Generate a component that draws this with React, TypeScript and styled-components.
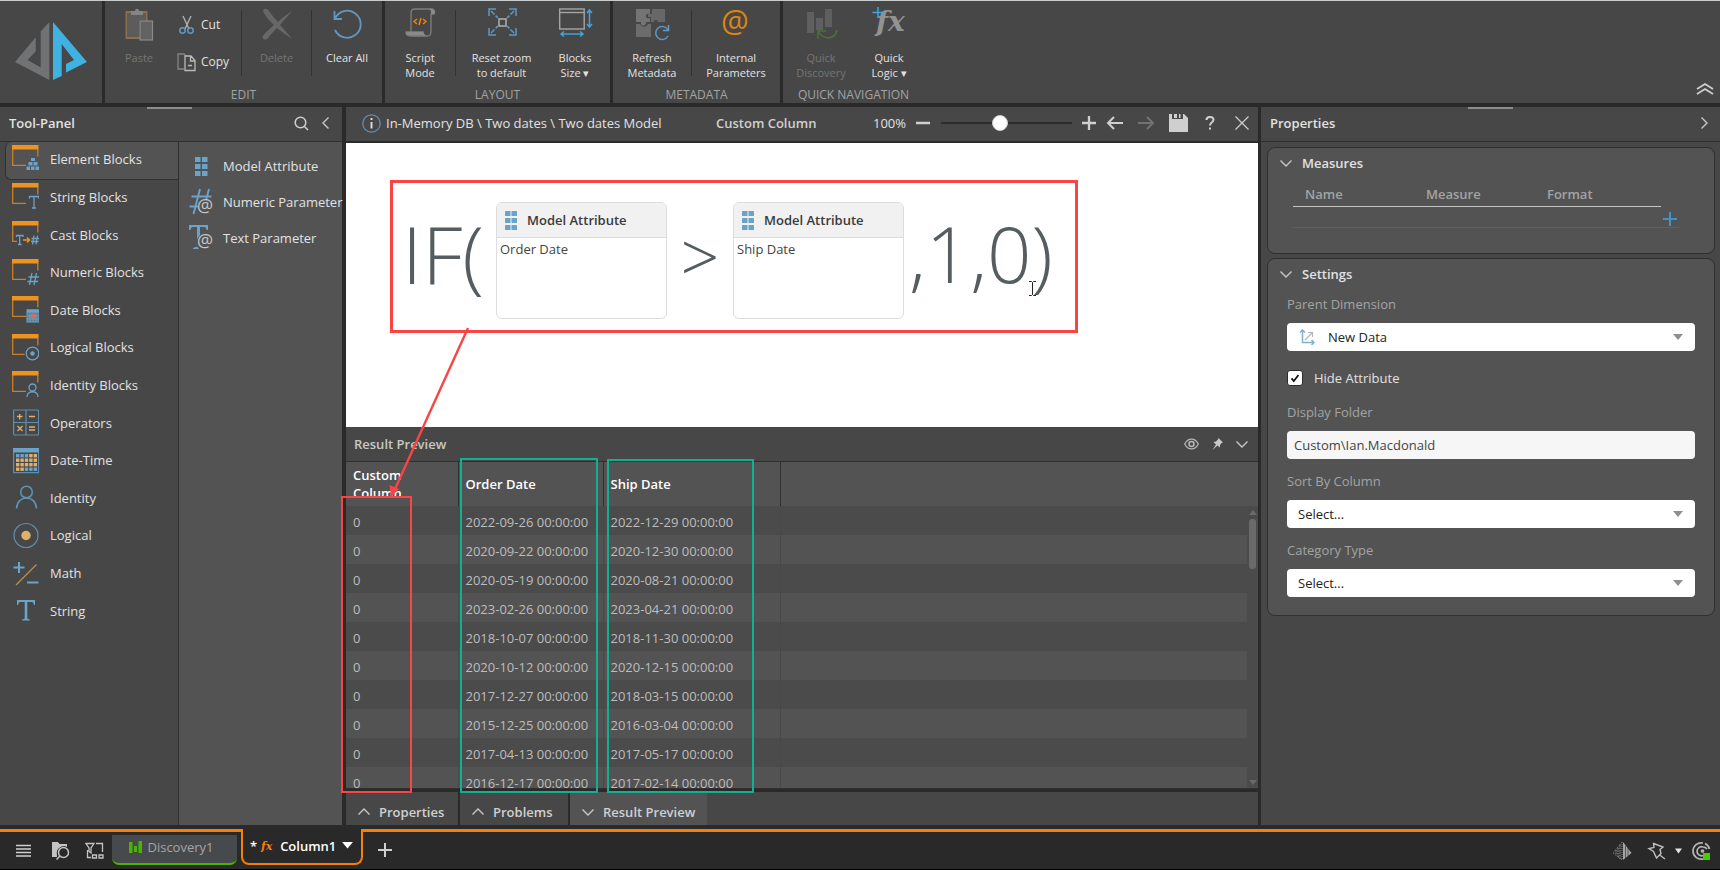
import React from "react";
import styled, { createGlobalStyle, css } from "styled-components";

const c = {
  gap: "#2a2a2a",
  panel: "#474747",
  raised: "#535353",
  stripe: "#4b4b4b",
  line: "#303030",
  text: "#e2e2e2",
  muted: "#a3a3a3",
  dim: "#757575",
  blue: "#6ba3c9",
  bright: "#3fa4df",
  amber: "#ee9220",
  orange: "#f77f07",
  red: "#fb4444",
  teal: "#10b090",
};

const Global = createGlobalStyle`
  * { box-sizing: border-box; }
  body { margin: 0; background: ${c.gap}; color: ${c.text}; font: 13px/20px "Open Sans", "Noto Sans", sans-serif; }
  button { font: inherit; color: inherit; background: none; border: 0; padding: 0; margin: 0; text-align: left; }
  h2, h3 { font-size: 13px; font-weight: 600; margin: 0; }
  ul { list-style: none; margin: 0; padding: 0; }
  svg { display: block; flex: none; }
`;

const Page = styled.div`
  display: flex;
  flex-direction: column;
  height: 100vh;
  border-top: 1px solid #c9cccc;
  border-bottom: 1px solid #000;
  overflow: hidden;
`;

/* ---------- ribbon ---------- */

const Ribbon = styled.header`
  display: flex;
  gap: 3px;
  height: 102px;
  flex: none;
`;

const Brand = styled.div`
  width: 102px;
  background: ${c.panel};
  padding: 21px 0 0 15px;
`;

const Group = styled.section<{ $w: number; $bare?: boolean }>`
  width: ${(p) => p.$w}px;
  background: ${c.panel};
  display: flex;
  flex-direction: column;
  justify-content: space-between;
  margin-right: ${(p) => (p.$bare ? "-3px" : "0")};
`;

const GroupItems = styled.div`
  display: flex;
`;

const GroupName = styled.div`
  text-align: center;
  color: ${c.muted};
  font-size: 12px;
  line-height: 16px;
`;

const Tool = styled.button<{ $w: number }>`
  width: ${(p) => p.$w}px;
  display: flex;
  flex-direction: column;
  align-items: center;
  gap: 9px;
  padding-top: 6px;
  text-align: center;
  font-size: 11px;
  line-height: 15px;
  white-space: pre-line;
  &:disabled { color: ${c.dim}; }
`;

const ToolDivider = styled.span`
  width: 1px;
  height: 66px;
  margin-top: 9px;
  background: #333;
`;

const SmallTools = styled.div`
  width: 68px;
  display: flex;
  flex-direction: column;
  gap: 17px;
  padding: 14px 0 0 4px;
`;

const SmallTool = styled.button`
  display: flex;
  align-items: center;
  gap: 5px;
  font-size: 12px;
  line-height: 20px;
`;

const RibbonRest = styled.div`
  flex: 1;
  background: ${c.panel};
  display: flex;
  justify-content: flex-end;
  align-items: flex-end;
  padding: 0 6px 8px;
`;

/* ---------- panels ---------- */

const Body = styled.main`
  flex: 1;
  min-height: 0;
  display: flex;
  padding: 4px 0;
`;

const Panel = styled.section<{ $w?: number }>`
  display: flex;
  flex-direction: column;
  min-width: 0;
  background: ${c.panel};
  ${(p) => (p.$w ? css`width: ${p.$w}px; flex: none;` : css`flex: 1; position: relative; margin: 0 3px 0 4px;`)}
`;

const PanelHead = styled.div`
  height: 35px;
  flex: none;
  display: flex;
  align-items: center;
  gap: 11px;
  padding: 0 10px 2px 9px;
  border-bottom: 1px solid ${c.line};
  position: relative;
  h2 { flex: 1; }
`;

const Grip = styled.span<{ $left: number }>`
  position: absolute;
  top: 0;
  left: ${(p) => p.$left}%;
  width: 45px;
  height: 2px;
  background: #8d8d8d;
`;

const ToolBody = styled.div`
  flex: 1;
  display: flex;
`;

const Categories = styled.ul`
  width: 178px;
  padding-left: 5px;
  display: grid;
  grid-auto-rows: 1fr;
  height: 489px;
`;

const Category = styled.button<{ $on: boolean }>`
  width: 100%;
  height: 100%;
  display: flex;
  align-items: center;
  gap: 11px;
  padding-left: 7px;
  padding-bottom: 3px;
  ${(p) =>
    p.$on &&
    css`
      background: ${c.raised};
      border-left: 1px solid ${c.line};
      border-bottom: 1px solid ${c.line};
      border-radius: 6px 0 0 6px;
      padding-left: 6px;
    `}
`;

const Elements = styled.ul`
  flex: 1;
  min-width: 0;
  background: ${c.raised};
  border-left: 1px solid ${c.line};
  padding: 6px 0 0 9px;
`;

const Element = styled.button`
  display: flex;
  align-items: center;
  gap: 7px;
  height: 36px;
  white-space: nowrap;
`;

/* ---------- editor ---------- */

const EditorBar = styled.div`
  height: 36px;
  flex: none;
  display: flex;
  align-items: center;
  padding: 0 0 2px 16px;
  border-bottom: 2px solid ${c.gap};
`;

const Crumbs = styled.span`
  width: 335px;
  padding-left: 5px;
  white-space: nowrap;
`;

const EditorTitle = styled.h2`
  flex: 1;
  color: #d0d0d0;
`;

const ZoomValue = styled.output`
  width: 43px;
`;

const Slider = styled.input`
  appearance: none;
  width: 131px;
  height: 16px;
  margin: 0 10px 0 11px;
  background: linear-gradient(#2c2c2c, #2c2c2c) center / 100% 2px no-repeat;
  &::-webkit-slider-thumb {
    appearance: none;
    width: 16px;
    height: 16px;
    border-radius: 50%;
    background: #fff;
    border: 1px solid #cfcfcf;
  }
`;

const BarActions = styled.div`
  display: flex;
  align-items: center;
  padding-left: 2px;
  button { width: 32px; display: flex; justify-content: center; }
`;

const Canvas = styled.div`
  height: 284px;
  flex: none;
  background: #fff;
  padding: 59px 0 0 56px;
`;

const Formula = styled.div`
  display: flex;
  align-items: flex-start;
`;

const Run = styled.span<{ $w: number; $kind?: "operator" | "tail" }>`
  width: ${(p) => p.$w}px;
  text-align: ${(p) => (p.$kind === "operator" ? "center" : "left")};
  padding-left: ${(p) => (p.$kind === "tail" ? 5 : 0)}px;
  color: #555d61;
  font-size: ${(p) => (p.$kind === "operator" ? 68 : p.$kind === "tail" ? 78 : 80)}px;
  font-weight: 300;
  line-height: ${(p) => (p.$kind === "operator" ? 108 : 102)}px;
  white-space: nowrap;
`;

const Block = styled.article`
  width: 171px;
  height: 117px;
  background: #fff;
  border: 1px solid #dcdcdc;
  border-radius: 6px;
  color: #444;
  overflow: hidden;
`;

const BlockHead = styled.div`
  height: 35px;
  display: flex;
  align-items: center;
  gap: 10px;
  padding-left: 8px;
  background: #f1f1f1;
  border-bottom: 1px solid #dcdcdc;
  font-weight: 600;
  color: #3a3a3a;
`;

const BlockBody = styled.div`
  padding: 1px 3px;
`;

const ResultHead = styled(PanelHead)`
  gap: 13px;
  padding-bottom: 0;
  padding-left: 8px;
  color: #c8c8c8;
`;

const ResultBody = styled.div`
  flex: 1;
  min-height: 0;
  overflow: hidden;
  display: flex;
  position: relative;
  background: ${c.stripe};
  border-bottom: 1px solid ${c.line};
`;

const Table = styled.table`
  flex: 1;
  width: 100%;
  border-collapse: collapse;
  table-layout: fixed;
  th, td { padding: 0 0 0 7px; text-align: left; white-space: nowrap; }
  th { height: 44px; background: ${c.raised}; color: #fff; font-weight: 600; border-right: 1px solid ${c.line}; }
  th:last-child { border-right: 0; }
  td { height: 29px; padding-top: 2px; color: #bdbdbd; border-right: 1px solid #484848; }
  td:last-child { border-right: 0; }
  tbody tr:nth-child(even) { background: ${c.raised}; }
`;

const Wrapped = styled.span`
  display: block;
  width: 60px;
  height: 30px;
  margin-bottom: 6px;
  line-height: 18px;
  white-space: normal;
  overflow: hidden;
`;

const ScrollTrack = styled.div`
  position: absolute;
  right: 0;
  top: 44px;
  bottom: 0;
  width: 11px;
  background: ${c.stripe};
  display: flex;
  flex-direction: column;
  align-items: center;
  gap: 4px;
  padding: 4px 0 3px;
`;

const ScrollThumb = styled.span`
  width: 7px;
  height: 50px;
  margin-bottom: auto;
  border-radius: 3px;
  background: #6a6a6a;
`;

const ResultTabs = styled.div`
  height: 36px;
  flex: none;
  display: flex;
  gap: 2px;
  border-top: 3px solid ${c.gap};
  background: ${c.panel};
`;

const ResultTab = styled.button<{ $w: number; $on?: boolean }>`
  width: ${(p) => p.$w}px;
  display: flex;
  align-items: center;
  gap: 9px;
  padding: 6px 0 0 12px;
  font-weight: 600;
  color: #d0d0d0;
  background: ${(p) => (p.$on ? c.raised : c.panel)};
  box-shadow: ${(p) => (p.$on ? "none" : `2px 0 0 ${c.gap}`)};
`;

/* ---------- call-outs drawn over the editor ---------- */

const Frame = styled.div<{ $x: number; $y: number; $w: number; $h: number; $color: string; $b: number }>`
  position: absolute;
  left: ${(p) => p.$x}px;
  top: ${(p) => p.$y}px;
  width: ${(p) => p.$w}px;
  height: ${(p) => p.$h}px;
  border: ${(p) => p.$b}px solid ${(p) => p.$color};
  pointer-events: none;
`;

const Pointer = styled.svg`
  position: absolute;
  left: 40px;
  top: 220px;
  pointer-events: none;
`;

const Caret = styled.svg`
  position: absolute;
  left: 683px;
  top: 174px;
`;

/* ---------- properties ---------- */

const Cards = styled.div`
  display: flex;
  flex-direction: column;
  gap: 4px;
  padding: 5px 5px 0 6px;
`;

const Card = styled.section<{ $pb: number }>`
  background: ${c.raised};
  border: 1px solid ${c.line};
  border-radius: 8px;
  padding: 5px 19px ${(p) => p.$pb}px;
`;

const CardTitle = styled.button`
  display: flex;
  align-items: center;
  gap: 10px;
  margin-left: -7px;
  font-weight: 600;
`;

const MeasureTable = styled.table`
  border-collapse: collapse;
  table-layout: fixed;
  width: calc(100% - 40px);
  margin: 11px 0 0 6px;
  th { text-align: left; font-weight: 600; color: ${c.muted}; padding: 0 0 2px 12px; border-bottom: 1px solid #c4c4c4; }
  th:not(:last-child) { width: 121px; }
`;

const AddRow = styled.div`
  display: flex;
  justify-content: flex-end;
  height: 21px;
  margin: 0 16px 0 6px;
  padding: 4px 2px 0 0;
  border-bottom: 1px solid #5e5e5e;
`;

const Fields = styled.div`
  display: flex;
  flex-direction: column;
  gap: 12px;
  margin-top: 10px;
`;

const Field = styled.div`
  display: flex;
  flex-direction: column;
  gap: 9px;
  label { color: ${c.muted}; }
`;

const Box = styled.span`
  position: relative;
  display: block;
`;

const boxStyle = css`
  width: 100%;
  height: 28px;
  border: 0;
  border-radius: 4px;
  font: inherit;
  display: block;
`;

const Select = styled.select<{ $icon?: boolean }>`
  ${boxStyle}
  appearance: none;
  background: #fff;
  color: #222;
  padding: 0 30px 0 ${(p) => (p.$icon ? 41 : 11)}px;
`;

const Input = styled.input`
  ${boxStyle}
  background: #f6f6f6;
  color: #444;
  padding: 0 7px;
`;

const Over = styled.span<{ $side: "left" | "right" }>`
  position: absolute;
  top: 0;
  bottom: 0;
  ${(p) => p.$side}: 12px;
  display: flex;
  align-items: center;
  pointer-events: none;
`;

const Check = styled.label`
  display: flex;
  align-items: center;
  gap: 11px;
  height: 27px;
  padding-top: 3px;
`;

const Tick = styled.input`
  appearance: none;
  width: 16px;
  height: 16px;
  margin: 0;
  background: #fff url("data:image/svg+xml,%3Csvg xmlns='http://www.w3.org/2000/svg' viewBox='0 0 16 16'%3E%3Cpath d='M4 8.5L6.6 11.5L12 4.5' fill='none' stroke='%23111' stroke-width='2'/%3E%3C/svg%3E") center no-repeat;
  border: 1px solid #2d2d2d;
  border-radius: 3px;
`;

/* ---------- task bar ---------- */

const TaskBar = styled.footer`
  height: 40px;
  flex: none;
  display: flex;
  align-items: flex-start;
  background: #292929;
  border-top: 3px solid ${c.orange};
`;

const TaskIcons = styled.div`
  width: 112px;
  height: 37px;
  display: flex;
  align-items: center;
  padding-left: 16px;
  gap: 14px;
`;

const DocTab = styled.button`
  width: 125px;
  height: 30px;
  margin-top: 3px;
  display: flex;
  align-items: center;
  justify-content: center;
  gap: 5px;
  padding: 0 6px 4px 0;
  background: #464a4d;
  color: #a5a5a5;
  border-bottom: 2px solid #4db301;
  border-radius: 0 0 7px 7px;
`;

const ActiveTab = styled.button`
  width: 122px;
  height: 36px;
  margin: -3px 0 0 4px;
  display: flex;
  align-items: center;
  gap: 6px;
  padding: 0 0 1px 7px;
  color: #fff;
  font-weight: 600;
  background: #292929;
  border: solid ${c.orange};
  border-width: 0 2px 2px;
  border-radius: 0 0 8px 8px;
`;

const AddTab = styled.button`
  margin: 11px 0 0 15px;
`;

const Tray = styled.div`
  margin-left: auto;
  height: 37px;
  display: flex;
  align-items: center;
  padding-right: 9px;
`;

/* ---------- icons ---------- */

const Chevron = ({ dir, w = 12, color = "#c8c8c8" }: { dir: "up" | "down" | "left" | "right"; w?: number; color?: string }) => {
  const turn = { down: 0, up: 180, left: 90, right: 270 }[dir];
  return (
    <svg width={w} height={w} viewBox="0 0 12 12" aria-hidden="true">
      <path d="M.5 3.5L6 9L11.5 3.5" transform={`rotate(${turn} 6 6)`} fill="none" stroke={color} strokeWidth="1.4" />
    </svg>
  );
};

const Triangle = ({ color, up, w = 10 }: { color: string; up?: boolean; w?: number }) => (
  <svg width={w} height={w / 2 + 1} viewBox="0 0 10 6" aria-hidden="true">
    <path d={up ? "M0 6L5 0L10 6Z" : "M0 0L5 6L10 0Z"} fill={color} />
  </svg>
);

const Plus = ({ color, w = 14, sw = 2 }: { color: string; w?: number; sw?: number }) => (
  <svg width={w} height={w} viewBox="0 0 14 14" aria-hidden="true">
    <path d="M7 0V14M0 7H14" stroke={color} strokeWidth={sw} />
  </svg>
);

const Dots = ({ w = 12, h = 19 }: { w?: number; h?: number }) => (
  <svg width={w} height={h} viewBox="0 0 12 19" aria-hidden="true" fill={c.blue}>
    {[0, 7, 14].map((y) => (
      <React.Fragment key={y}>
        <rect x="0" y={y} width="5.5" height="5" rx=".5" />
        <rect x="6.5" y={y} width="5.5" height="5" rx=".5" />
      </React.Fragment>
    ))}
  </svg>
);

const serif = "DejaVu Serif, Liberation Serif, serif";

const marks: Record<string, React.ReactNode> = {
  element: (
    <g fill={c.blue}>
      <rect x="19" y="13" width="4" height="3" />
      <rect x="16.500" y="17" width="4" height="3.500" />
      <rect x="21.500" y="17" width="4" height="3.500" />
      <rect x="14.500" y="21.500" width="3.500" height="3.500" />
      <rect x="19" y="21.500" width="3.500" height="3.500" />
      <rect x="23.500" y="21.500" width="3.500" height="3.500" />
    </g>
  ),
  string: <path d="M17.500 15.500V13.500H26.500V15.500M22 13.500V25M20 25H24" stroke={c.blue} strokeWidth="1.300" fill="none" />,
  cast: (
    <g fill="none" strokeWidth="1.300" stroke={c.blue}>
      <path d="M0 13H27V22H0Z" fill={c.panel} stroke="none" />
      <path d="M.7 12V20.300H5" stroke="#c77f2b" />
      <path d="M4.500 16V14.500H11V16M7.700 14.500V23.500M6 23.500H9.500" />
      <path d="M11 19H17M15 16.500L17.500 19L15 21.500" stroke={c.amber} strokeWidth="1.600" />
      <path d="M22 14.500L20.500 23.500M25.500 14.500L24 23.500M19.500 17.500H27M19 20.500H26.500" />
    </g>
  ),
  numeric: <path d="M20 14L17.500 26M24.500 14L22 26M16.500 18H27M15.500 22.500H26" stroke={c.blue} strokeWidth="1.300" />,
  date: (
    <g>
      <rect x="15" y="14" width="12" height="12" fill="#587a92" stroke={c.blue} />
      <rect x="15" y="13.500" width="12" height="3" fill={c.blue} />
      <path d="M15 20H27M15 23H27M18 16V26M24 16V26M21 16V26" stroke="#8cb4cf" strokeWidth=".6" />
      <rect x="19" y="18" width="4" height="4" fill="#e0675a" />
    </g>
  ),
  logical: (
    <g>
      <circle cx="20.500" cy="19.500" r="8" fill={c.panel} />
      <circle cx="20.500" cy="19.500" r="6.300" fill="none" stroke={c.blue} strokeWidth="1.200" />
      <circle cx="20.500" cy="19.500" r="2.200" fill={c.blue} />
    </g>
  ),
  identity: (
    <g fill="none" stroke={c.blue} strokeWidth="1.300">
      <circle cx="20.500" cy="16.500" r="3.500" />
      <path d="M15 26C15 19 26 19 26 26" />
    </g>
  ),
};

const WindowIcon = ({ mark }: { mark: string }) => (
  <svg width="27" height="27" viewBox="0 0 27 27" aria-hidden="true">
    <path d="M.7 1V20.300H14M25.800 4V11.500" fill="none" stroke="#c77f2b" strokeWidth="1.300" />
    <rect x="0" y="0" width="26.500" height="4.500" fill={c.amber} />
    {marks[mark]}
  </svg>
);

const tan = "#dfb06c";
const plain: Record<string, React.ReactNode> = {
  operators: (
    <g fill="none" stroke="#5f8fae" strokeWidth="1.200">
      <rect x="1.600" y="1" width="25" height="25" rx="1" />
      <path d="M14 1V26M1.500 13.500H26.500" />
      <path d="M5 7.500H10.500M7.700 5V10.500M17 7.500H23M5.500 17L10.500 22M10.500 17L5.500 22M17 18H23M17 21H23" stroke={tan} strokeWidth="1.300" />
    </g>
  ),
  datetime: (
    <g>
      <rect x="1.600" y="1.600" width="25" height="24" fill="none" stroke="#5f8fae" strokeWidth="1.200" />
      <rect x="1" y="1" width="26" height="4.500" fill={c.blue} />
      {[0, 1, 2, 3].map((r) =>
        [0, 1, 2, 3, 4].map((k) => (
          <rect
            key={`${r}-${k}`}
            x={4 + k * 4.4}
            y={7 + r * 4.5}
            width="3.400"
            height="3.400"
            fill={(r === 0 && k < 3) || (r === 3 && k > 1) ? c.blue : tan}
          />
        ))
      )}
    </g>
  ),
  identity: (
    <g fill="none" stroke="#5f94b8" strokeWidth="1.500">
      <circle cx="14.500" cy="8" r="5.800" />
      <path d="M4.500 24.500C5 10.500 24 10.500 24.500 24.500" />
    </g>
  ),
  logical: (
    <g>
      <circle cx="14" cy="13.500" r="12" fill="none" stroke="#5f8fae" strokeWidth="1.200" />
      <circle cx="14" cy="13.500" r="4.700" fill={tan} />
    </g>
  ),
  math: (
    <g fill="none">
      <path d="M7 2V13M1.500 7.500H12.500" stroke={c.blue} strokeWidth="2" />
      <path d="M24.500 4.500L4 25" stroke="#b8904f" strokeWidth="1.300" />
      <path d="M15 22.500H26.500" stroke={c.blue} strokeWidth="2" />
    </g>
  ),
  string: (
    <path
      d="M5 3H23V8H22C21.500 5.500 21 5 18.500 5H15.300V20.500C15.300 22 16 22.300 18 22.500V23.500H10V22.500C12 22.300 12.700 22 12.700 20.500V5H9.500C7 5 6.500 5.500 6 8H5Z"
      fill={c.blue}
    />
  ),
};

const PlainIcon = ({ name }: { name: string }) => (
  <svg width="27" height="27" viewBox="0 0 27 27" aria-hidden="true">{plain[name]}</svg>
);

const At = ({ x, y, size, color }: { x: number; y: number; size: number; color: string }) => (
  <text x={x} y={y} fontSize={size} fill={color} fontFamily="Open Sans, sans-serif">@</text>
);

const ElementIcon = ({ name }: { name: string }) => (
  <svg width="28" height="28" viewBox="0 0 28 28" overflow="visible" aria-hidden="true">
    {name === "attribute" && (
      <g fill={c.blue}>
        {[5, 12, 19].map((y) => (
          <React.Fragment key={y}>
            <rect x="7" y={y} width="5.500" height="5" />
            <rect x="14" y={y} width="5.500" height="5" />
          </React.Fragment>
        ))}
      </g>
    )}
    {name === "number" && (
      <g>
        <path d="M12 1L5.500 26M21 1L18 12M3.500 8.500H23.500M1.500 18.500H10" stroke={c.blue} strokeWidth="1.900" />
        <At x={9} y={24} size={18} color="#c4c4c4" />
      </g>
    )}
    {name === "text" && (
      <g>
        <path d="M1 1H20V6H18.500C18 3.500 17.500 3 15 3H12V11L9 15V3H6C3.500 3 3 3.500 2.500 6H1ZM5 25V24L9 22.500L11 25Z" fill={c.blue} />
        <At x={9} y={23} size={18} color="#c4c4c4" />
      </g>
    )}
  </svg>
);

const ribbonArt: Record<string, React.ReactNode> = {
  paste: (
    <g fill="none">
      <rect x="4.500" y="5" width="20" height="26" stroke="#8a6f51" strokeWidth="2" />
      <path d="M6 6H23V13H17V30H6Z" fill="#5c5c5c" />
      <path d="M9 8V4H13C13 1 17 1 17 4H21V8Z" fill="#858585" />
      <rect x="18" y="14" width="12.500" height="19" fill="#626262" stroke="#8a8a8a" strokeWidth="1.200" />
    </g>
  ),
  remove: (
    <path d="M3 4C4 1 7 1 9 4C12 8 15 12 18 15C22 11 27 7 32 4C28 9 23 14 20 18C24 22 28 27 32 32C26 28 21 24 17 21C14 24 11 27 8 31C6 34 1 32 3 29C6 25 10 21 14 18C10 14 5 9 3 4Z" fill="#676767" />
  ),
  undo: <path d="M4.500 4V12H12M5 11.500A13.500 13.500 0 1 1 5 23" fill="none" stroke="#5f98c2" strokeWidth="1.800" />,
  script: (
    <g transform="translate(2 0)">
      <path d="M6 25V6C6 3 7 2 10 2H27C30 2 30 6 29 7H26V23C26 28 25 29 22 29H6C2 29 1 28 1 25H18C18 27 19 28 20 28" fill="none" stroke="#7f7f7f" strokeWidth="1.300" />
      <path d="M1 25H18L20 28.500H5C2 28.500 1 27 1 25ZM24 2H27C30 2 30 6 29 7H26C26 4 26 3 24 2Z" fill="#8a8a8a" />
      <path d="M12 12L9 14.500L12 17M18 12L21 14.500L18 17M16 11L14 18" fill="none" stroke={c.orange} strokeWidth="1.500" />
    </g>
  ),
  zoomReset: (
    <g transform="translate(2 0)" fill="none" strokeWidth="1.500" stroke="#5f98c2">
      <path d="M2 9V2H9M22 2H29V9M2 21V28H9M29 21V28H22" />
      <path d="M4 4L11 11M27 4L20 11M4 26L11 19M27 26L20 19" strokeDasharray="5 1.500" />
      <rect x="12" y="12" width="7" height="7" stroke="#b0b0b0" />
    </g>
  ),
  blocks: (
    <g transform="translate(1 0)" fill="none" strokeWidth="1.400">
      <rect x="0.700" y="2" width="24.500" height="20" stroke="#a5a5a5" />
      <path d="M1 5.500H25" stroke="#a5a5a5" />
      <g stroke={c.bright} strokeWidth="1.500">
        <path d="M2 27H24M5 24.500L2 27L5 29.500M21 24.500L24 27L21 29.500" />
        <path d="M30.500 3V20M28 6L30.500 3L33 6M28 17L30.500 20L33 17" />
      </g>
    </g>
  ),
  refresh: (
    <g transform="translate(1 0)">
      <path d="M0 2H14V7C11 6 9 8 10 10C11 12 13 11 14 11V15H10C11 18 6 20 5 17L5 15H0Z" fill="#747474" />
      <path d="M16 2H29V15H22C21 12 18 12 18 15H15V10H12V7H16Z" fill="#686868" />
      <path d="M0 17H4C6 21 11 20 12 17H15V30H0Z" fill="#6c6c6c" />
      <circle cx="26" cy="26" r="9" fill={c.panel} />
      <path d="M32 23A6.500 6.500 0 1 0 32 29M32.500 18V23.500H27" fill="none" stroke="#5f98c2" strokeWidth="1.500" />
    </g>
  ),
  at: <text x="2" y="25" fontSize="31" fill="#dd8410" fontFamily="Open Sans, sans-serif">@</text>,
  discovery: (
    <g transform="translate(2 0)" fill="#5f5f5f">
      <rect x="1" y="5" width="7" height="21" />
      <rect x="10" y="11" width="7" height="12" />
      <rect x="19" y="2" width="7" height="18" />
      <path d="M12 32V24H20M12.500 24.500C17 33 29 33 31 23" fill="none" stroke="#4d7037" strokeWidth="1.600" />
    </g>
  ),
  logic: (
    <g fontStyle="italic" fontWeight="700" fill="#929292" fontFamily={serif}>
      <text x="4" y="24" fontSize="28">fx</text>
      <path d="M6 0V11M.5 5.500H11.500" stroke={c.bright} strokeWidth="1.500" />
    </g>
  ),
};

const RibbonIcon = ({ name }: { name: string }) => (
  <svg width="34" height="34" viewBox="0 0 34 34" overflow="visible" aria-hidden="true">{ribbonArt[name]}</svg>
);

const Logo = () => (
  <svg width="73" height="60" viewBox="0 0 73 60" role="img" aria-label="Pyramid">
    <path d="M34.300 0V58L0 40L20.700 15.300V29.500L12.500 38L25.700 45.500V9.500Z" fill="#707274" />
    <path d="M38 0L72 40L51 50.500V42L59 38L46.700 22V54L38 58Z" fill="#3fb2e2" />
  </svg>
);

/* ---------- data ---------- */

const categories: [string, React.ReactNode][] = [
  ["Element Blocks", <WindowIcon mark="element" />],
  ["String Blocks", <WindowIcon mark="string" />],
  ["Cast Blocks", <WindowIcon mark="cast" />],
  ["Numeric Blocks", <WindowIcon mark="numeric" />],
  ["Date Blocks", <WindowIcon mark="date" />],
  ["Logical Blocks", <WindowIcon mark="logical" />],
  ["Identity Blocks", <WindowIcon mark="identity" />],
  ["Operators", <PlainIcon name="operators" />],
  ["Date-Time", <PlainIcon name="datetime" />],
  ["Identity", <PlainIcon name="identity" />],
  ["Logical", <PlainIcon name="logical" />],
  ["Math", <PlainIcon name="math" />],
  ["String", <PlainIcon name="string" />],
];

const rows = [
  ["2022-09-26", "2022-12-29"],
  ["2020-09-22", "2020-12-30"],
  ["2020-05-19", "2020-08-21"],
  ["2023-02-26", "2023-04-21"],
  ["2018-10-07", "2018-11-30"],
  ["2020-10-12", "2020-12-15"],
  ["2017-12-27", "2018-03-15"],
  ["2015-12-25", "2016-03-04"],
  ["2017-04-13", "2017-05-17"],
  ["2016-12-17", "2017-02-14"],
];

const AttributeBlock = ({ value }: { value: string }) => (
  <Block>
    <BlockHead><Dots />Model Attribute</BlockHead>
    <BlockBody>{value}</BlockBody>
  </Block>
);

const SelectField = ({ id, label, value, icon }: { id: string; label: string; value: string; icon?: React.ReactNode }) => (
  <Field>
    <label htmlFor={id}>{label}</label>
    <Box>
      <Select id={id} $icon={!!icon} defaultValue={value}><option>{value}</option></Select>
      {icon && <Over $side="left">{icon}</Over>}
      <Over $side="right"><Triangle color="#8f8f8f" /></Over>
    </Box>
  </Field>
);

export default function App() {
  return (
    <Page>
      <Global />
      <Ribbon>
        <Brand><Logo /></Brand>
        <Group $w={277}>
          <GroupItems>
            <Tool $w={68} disabled><RibbonIcon name="paste" />Paste</Tool>
            <SmallTools>
              <SmallTool>
                <svg width="19" height="20" viewBox="0 0 19 20" aria-hidden="true" fill="none">
                  <path d="M6 1L12 14M14 1L8 14" stroke="#b5b5b5" strokeWidth="1.300" />
                  <circle cx="5.500" cy="15.500" r="2.700" stroke="#5f98c2" strokeWidth="1.500" />
                  <circle cx="13.500" cy="15.500" r="2.700" stroke="#5f98c2" strokeWidth="1.500" />
                </svg>
                Cut
              </SmallTool>
              <SmallTool>
                <svg width="19" height="20" viewBox="0 0 19 20" aria-hidden="true" fill="none">
                  <path d="M7 17H1V2H7L9 4" stroke="#858585" strokeWidth="1.300" />
                  <path d="M8 4H14L18 8.500V18.500H8ZM13.500 4V9H18M11 13.500H15" stroke="#bababa" strokeWidth="1.300" />
                </svg>
                Copy
              </SmallTool>
            </SmallTools>
            <ToolDivider />
            <Tool $w={69} disabled><RibbonIcon name="remove" />Delete</Tool>
            <ToolDivider />
            <Tool $w={70}><RibbonIcon name="undo" />Clear All</Tool>
          </GroupItems>
          <GroupName>EDIT</GroupName>
        </Group>
        <Group $w={225}>
          <GroupItems>
            <Tool $w={70}><RibbonIcon name="script" />{"Script\nMode"}</Tool>
            <ToolDivider />
            <Tool $w={91}><RibbonIcon name="zoomReset" />{"Reset zoom\nto default"}</Tool>
            <Tool $w={56}><RibbonIcon name="blocks" />{"Blocks\nSize ▾"}</Tool>
          </GroupItems>
          <GroupName>LAYOUT</GroupName>
        </Group>
        <Group $w={167}>
          <GroupItems>
            <Tool $w={78}><RibbonIcon name="refresh" />{"Refresh\nMetadata"}</Tool>
            <ToolDivider />
            <Tool $w={88}><RibbonIcon name="at" />{"Internal\nParameters"}</Tool>
          </GroupItems>
          <GroupName>METADATA</GroupName>
        </Group>
        <Group $w={141} $bare>
          <GroupItems>
            <Tool $w={76} disabled><RibbonIcon name="discovery" />{"Quick\nDiscovery"}</Tool>
            <Tool $w={60}><RibbonIcon name="logic" />{"Quick\nLogic ▾"}</Tool>
          </GroupItems>
          <GroupName>QUICK NAVIGATION</GroupName>
        </Group>
        <RibbonRest>
          <button aria-label="Collapse ribbon">
            <svg width="18" height="13" viewBox="0 0 18 13" fill="none" stroke="#d0d0d0" strokeWidth="1.700">
              <path d="M1 7L9 2L17 7M1 12L9 7L17 12" />
            </svg>
          </button>
        </RibbonRest>
      </Ribbon>

      <Body>
        <Panel $w={342}>
          <PanelHead>
            <Grip $left={43} />
            <h2>Tool-Panel</h2>
            <button aria-label="Search">
              <svg width="15" height="15" viewBox="0 0 15 15" fill="none" stroke="#cfcfcf" strokeWidth="1.500">
                <circle cx="6.500" cy="6.500" r="5.300" />
                <path d="M10.500 10.500L14 14" />
              </svg>
            </button>
            <button aria-label="Collapse"><Chevron dir="left" /></button>
          </PanelHead>
          <ToolBody>
            <Categories>
              {categories.map(([name, icon], i) => (
                <li key={name}><Category $on={i === 0}>{icon}{name}</Category></li>
              ))}
            </Categories>
            <Elements>
              <li><Element><ElementIcon name="attribute" />Model Attribute</Element></li>
              <li><Element><ElementIcon name="number" />Numeric Parameter</Element></li>
              <li><Element><ElementIcon name="text" />Text Parameter</Element></li>
            </Elements>
          </ToolBody>
        </Panel>

        <Panel>
          <EditorBar>
            <svg width="19" height="19" viewBox="0 0 19 19" aria-hidden="true">
              <circle cx="9.500" cy="9.500" r="8.700" fill="none" stroke="#5f8fb0" strokeWidth="1.300" />
              <path d="M9.500 4V6M9.500 8V14.500" stroke="#ddd" strokeWidth="1.900" />
            </svg>
            <Crumbs>In-Memory DB \ Two dates \ Two dates Model</Crumbs>
            <EditorTitle>Custom Column</EditorTitle>
            <ZoomValue>100%</ZoomValue>
            <button aria-label="Zoom out">
              <svg width="14" height="14" viewBox="0 0 14 14"><path d="M0 7H14" stroke="#cfcfcf" strokeWidth="2.500" /></svg>
            </button>
            <Slider type="range" aria-label="Zoom" defaultValue={44} />
            <button aria-label="Zoom in"><Plus color="#cfcfcf" sw={2.3} /></button>
            <BarActions>
              <button aria-label="Undo">
                <svg width="17" height="14" viewBox="0 0 17 14" fill="none" stroke="#d0d0d0" strokeWidth="2"><path d="M17 7H2M8 1L2 7L8 13" /></svg>
              </button>
              <button aria-label="Redo">
                <svg width="17" height="14" viewBox="0 0 17 14" fill="none" stroke="#737373" strokeWidth="2"><path d="M0 7H15M9 1L15 7L9 13" /></svg>
              </button>
              <button aria-label="Save">
                <svg width="19" height="18" viewBox="0 0 19 18" fill="#cfcfcf"><path d="M0 0H3V5H14V0H15L19 4V18H0ZM5 0H8V4H5ZM10 0H11.500V4H10Z" /></svg>
              </button>
              <button aria-label="Help">
                <svg width="10" height="14" viewBox="0 0 10 14" fill="none" stroke="#d0d0d0" strokeWidth="2"><path d="M1.500 4C1.500 0 8.500 0 8.500 3.800C8.500 6.500 5 6 5 9.500M5 11.500V13.500" /></svg>
              </button>
              <button aria-label="Close">
                <svg width="14" height="14" viewBox="0 0 14 14" stroke="#cfcfcf" strokeWidth="1.200"><path d="M.5.5L13.500 13.500M13.500.5L.5 13.500" /></svg>
              </button>
            </BarActions>
          </EditorBar>
          <Canvas>
            <Formula>
              <Run $w={94}>IF(</Run>
              <AttributeBlock value="Order Date" />
              <Run $w={66} $kind="operator">&gt;</Run>
              <AttributeBlock value="Ship Date" />
              <Run $w={160} $kind="tail">,1,0)</Run>
            </Formula>
          </Canvas>
          <ResultHead>
            <h2>Result Preview</h2>
            <button aria-label="Show">
              <svg width="15" height="12" viewBox="0 0 15 12" fill="none" stroke="#b8b8b8" strokeWidth="1.200">
                <path d="M.7 6C4 -.5 11 -.5 14.300 6C11 12.500 4 12.500 .7 6Z" />
                <circle cx="7.500" cy="6" r="2.500" strokeWidth="1.500" />
              </svg>
            </button>
            <button aria-label="Pin">
              <svg width="11" height="12" viewBox="0 0 11 12" fill="#c8c8c8"><path d="M6.500 0L11 4.500L9.500 5L8 7V9.500L5.500 7.500L.5 12L4 6.500L1.500 4L4 3.500L6 1.500Z" /></svg>
            </button>
            <button aria-label="Collapse results"><Chevron dir="down" /></button>
          </ResultHead>
          <ResultBody>
            <Table>
              <colgroup>
                <col style={{ width: 112 }} />
                <col style={{ width: 145 }} />
                <col style={{ width: 177 }} />
                <col />
              </colgroup>
              <thead>
                <tr>
                  <th><Wrapped>Custom Column</Wrapped></th>
                  <th>Order Date</th>
                  <th>Ship Date</th>
                  <th aria-label="Filler" />
                </tr>
              </thead>
              <tbody>
                {rows.map(([order, ship]) => (
                  <tr key={order}>
                    <td>0</td>
                    <td>{order} 00:00:00</td>
                    <td>{ship} 00:00:00</td>
                    <td />
                  </tr>
                ))}
              </tbody>
            </Table>
            <ScrollTrack>
              <Triangle color="#6a6a6a" up w={8} />
              <ScrollThumb />
              <Triangle color="#6a6a6a" w={8} />
            </ScrollTrack>
          </ResultBody>
          <ResultTabs>
            <ResultTab $w={112}><Chevron dir="up" />Properties</ResultTab>
            <ResultTab $w={108}><Chevron dir="up" />Problems</ResultTab>
            <ResultTab $w={137} $on><Chevron dir="down" />Result Preview</ResultTab>
          </ResultTabs>

          <Frame $x={44} $y={73} $w={688} $h={153} $color={c.red} $b={3} />
          <Pointer width="90" height="172" viewBox="0 0 90 172" aria-hidden="true">
            <path d="M82 1L9 162" stroke={c.red} strokeWidth="2.400" />
            <path d="M3.500 158L13 162L5 170Z" fill={c.red} />
          </Pointer>
          <Frame $x={-5} $y={389} $w={71} $h={297} $color={c.red} $b={2} />
          <Frame $x={114} $y={351} $w={138} $h={335} $color={c.teal} $b={2} />
          <Frame $x={261} $y={352} $w={147} $h={334} $color={c.teal} $b={2} />
          <Caret width="7" height="15" viewBox="0 0 7 15" aria-hidden="true">
            <path d="M0 .5H2.500L3.500 1.500L4.500 .5H7M3.500 1.500V13.500M0 14.500H2.500L3.500 13.500L4.500 14.500H7" fill="none" stroke="#222" />
          </Caret>
        </Panel>

        <Panel $w={459}>
          <PanelHead>
            <Grip $left={45} />
            <h2>Properties</h2>
            <button aria-label="Collapse properties"><Chevron dir="right" /></button>
          </PanelHead>
          <Cards>
            <Card $pb={25}>
              <CardTitle><Chevron dir="down" />Measures</CardTitle>
              <MeasureTable>
                <thead><tr><th>Name</th><th>Measure</th><th>Format</th></tr></thead>
              </MeasureTable>
              <AddRow><button aria-label="Add measure"><Plus color="#4292c9" /></button></AddRow>
            </Card>
            <Card $pb={18}>
              <CardTitle><Chevron dir="down" />Settings</CardTitle>
              <Fields>
                <SelectField
                  id="parent"
                  label="Parent Dimension"
                  value="New Data"
                  icon={
                    <svg width="17" height="16" viewBox="0 0 17 16" fill="none" aria-hidden="true">
                      <path d="M3.500 1V13.500H15M1 3.500L3.500 1L6 3.500M12.500 11L15 13.500L12.500 16" stroke="#7fb0d3" strokeWidth="1.500" />
                      <path d="M6 11L13 4M9 3.500H13.500V8" stroke="#b5b5b5" strokeWidth="1.200" />
                    </svg>
                  }
                />
                <Check><Tick type="checkbox" defaultChecked />Hide Attribute</Check>
                <Field>
                  <label htmlFor="folder">Display Folder</label>
                  <Input id="folder" defaultValue="Custom\Ian.Macdonald" />
                </Field>
                <SelectField id="sort" label="Sort By Column" value="Select..." />
                <SelectField id="category" label="Category Type" value="Select..." />
              </Fields>
            </Card>
          </Cards>
        </Panel>
      </Body>

      <TaskBar>
        <TaskIcons>
          <button aria-label="Menu">
            <svg width="21" height="13" viewBox="0 0 21 13" stroke="#d0d0d0" strokeWidth="1.700"><path d="M0 1.500H15M0 5H15M0 8.500H15M0 12H15" /></svg>
          </button>
          <button aria-label="Browse content">
            <svg width="20" height="19" viewBox="0 0 20 19" fill="#c4c4c4">
              <path d="M1 1H7L8.500 3H16V6A7 7 0 0 0 6 14V16H1Z" />
              <circle cx="12.500" cy="11.500" r="5" fill="none" stroke="#c4c4c4" strokeWidth="1.500" />
              <path d="M9 15L5.500 18.500" stroke="#c4c4c4" strokeWidth="1.500" />
            </svg>
          </button>
          <button aria-label="Flow">
            <svg width="19" height="17" viewBox="0 0 19 17" fill="none" stroke="#c4c4c4" strokeWidth="1.300">
              <path d="M1 1.500H9L6 6V11L4 9.500V6ZM11 1.500H17.500V10M2.500 8V15.500H6" />
              <path d="M7.500 13H11.500V16H7.500ZM14 13H18V16H14Z" />
            </svg>
          </button>
        </TaskIcons>
        <DocTab>
          <svg width="13" height="12" viewBox="0 0 13 12" fill="#4db301" aria-hidden="true"><path d="M0 1H3.500V12H0ZM5 5H8V11H5ZM9.500 0H13V12H9.500Z" /></svg>
          Discovery1
        </DocTab>
        <ActiveTab>
          <span>*</span>
          <svg width="11" height="14" viewBox="0 0 11 14" overflow="visible" aria-hidden="true">
            <text x="-2" y="11" fontSize="11" fontStyle="italic" fontWeight="700" fill={c.orange} fontFamily={serif}>fx</text>
          </svg>
          <span>Column1</span>
          <Triangle color="#fff" w={11} />
        </ActiveTab>
        <AddTab aria-label="New tab"><Plus color="#cfcfcf" /></AddTab>
        <Tray>
          <svg width="19" height="18" viewBox="0 0 19 18" aria-hidden="true">
            <path d="M9 0V18L0 11Z" fill="none" stroke="#8a8a8a" strokeDasharray="1 1" />
            <path d="M7 3V17M5 6V15M3 8V13" stroke="#7a7a7a" strokeDasharray="1.500 1" strokeWidth="1.500" />
            <path d="M10 0L18.500 11L10 18Z" fill="#a5a5a5" />
            <path d="M12.500 4V16M15 6V14" stroke="#444" strokeWidth=".8" />
          </svg>
          <svg width="51" height="18" viewBox="0 0 51 18" aria-hidden="true">
            <path d="M21.500 1.500L31 5L28 7.500L29 11.500L24.500 16L21.500 9.500L17 6.500L22 5.500ZM27 12.500L33 17" fill="none" stroke="#bdbdbd" strokeWidth="1.400" />
            <path d="M43 6.500H50L46.500 11.500Z" fill="#e4e4e4" />
          </svg>
          <svg width="28" height="20" viewBox="2 0 28 20" aria-hidden="true">
            <g fill="none" stroke="#b5b5b5" strokeWidth="1.700">
              <path d="M22 2A8.200 8.200 0 1 0 22 18M28.500 8A8 8 0 0 0 24 2.500" />
              <path d="M22 6A4.500 4.500 0 1 0 22 14.500M26 8A5 5 0 0 0 22 6" />
              <circle cx="21.500" cy="10" r="1" />
            </g>
            <rect x="22" y="12" width="7" height="7" fill="#44cf05" />
          </svg>
        </Tray>
      </TaskBar>
    </Page>
  );
}
